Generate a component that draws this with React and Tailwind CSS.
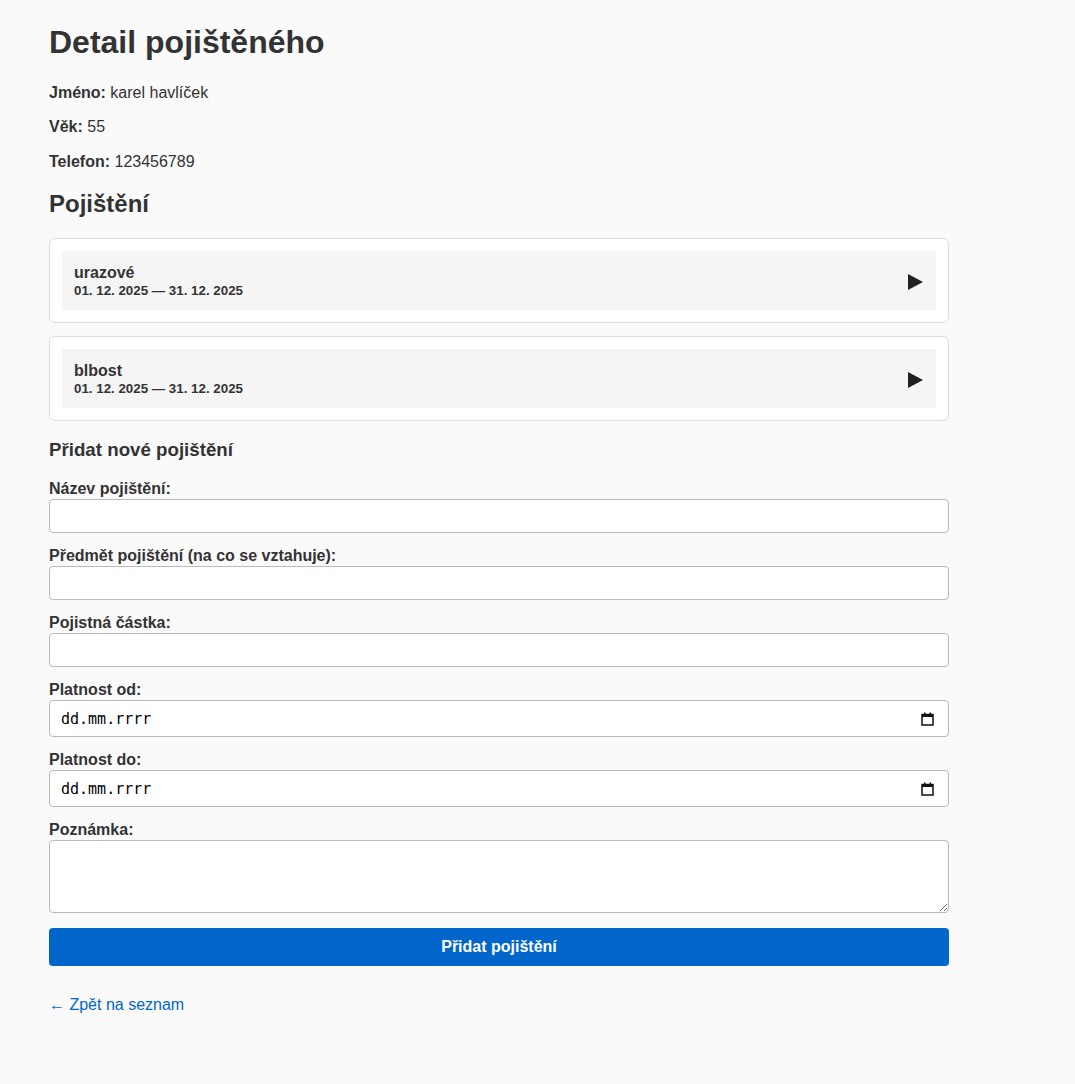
import React from "react";

const policies = [
	{name: "urazové", from: "01. 12. 2025", to: "31. 12. 2025"},
	{name: "blbost", from: "01. 12. 2025", to: "31. 12. 2025"},
];

const CalendarIcon = () => (
	<svg width="13" height="14" viewBox="0 0 13 14" fill="none">
		<rect x="1" y="2.5" width="11" height="10.5" stroke="#111" strokeWidth="1.5"/>
		<rect x="1" y="2.5" width="11" height="2.5" fill="#111"/>
		<rect x="3" y="0.5" width="1.5" height="2.5" fill="#111"/>
		<rect x="8.5" y="0.5" width="1.5" height="2.5" fill="#111"/>
	</svg>
);

const TextField = ({label}) => (
	<div>
		<label className="block font-bold leading-[18px] mb-px">{label}</label>
		<input type="text" className="block w-full h-[34px] mb-[14px] px-2 bg-white border border-[#bbb] rounded-[4px] outline-none"/>
	</div>
);

const DateField = ({label}) => (
	<div>
		<label className="block font-bold leading-[18px] mb-px">{label}</label>
		<div className="flex items-center justify-between w-full h-[37px] mb-[14px] pl-[11px] pr-[14px] bg-white border border-[#bbb] rounded-[4px]">
			<input
				type="text"
				placeholder="dd.mm.rrrr"
				className="flex-1 outline-none bg-transparent text-[15px] placeholder:text-black"
				style={{fontFamily: '"DejaVu Sans Mono", monospace'}}
			/>
			<CalendarIcon/>
		</div>
	</div>
);

const PolicyCard = ({policy}) => (
	<div className="bg-white border border-[#ddd] rounded-[6px] p-3 mb-[13px]">
		<div className="flex items-center justify-between h-[59px] bg-[#f5f5f5] pl-3 pr-[13px]">
			<div className="mt-[2px]">
				<div className="font-bold leading-[18px]">{policy.name}</div>
				<div className="font-bold text-[13.33px] leading-[16px] mt-px">{policy.from} — {policy.to}</div>
			</div>
			<svg width="15" height="16" viewBox="0 0 15 16" className="mt-[3px]">
				<polygon points="0,0 15,8 0,16" fill="#222"/>
			</svg>
		</div>
	</div>
);

export default function App() {
	return (
		<div
			className="min-h-[1084px] bg-[#fafafa] text-[#333] text-base"
			style={{fontFamily: '"Liberation Sans", Arial, sans-serif'}}
		>
			<div className="w-[900px] ml-[49px] pt-[24px]">
				<h1 className="text-[32px] leading-[37px] font-bold mb-[23px]">Detail pojištěného</h1>
				<p className="leading-[18.4px] mb-4"><b>Jméno:</b> karel havlíček</p>
				<p className="leading-[18.4px] mb-4"><b>Věk:</b> 55</p>
				<p className="leading-[18.4px]"><b>Telefon:</b> 123456789</p>
				<h2 className="text-2xl leading-[27.6px] font-bold mt-[19px] mb-[20px]">Pojištění</h2>

				{policies.map((p, i) => (
					<PolicyCard key={i} policy={p}/>
				))}

				<h3 className="text-[18.72px] leading-[21.5px] font-bold mt-[18px] mb-[20px]">Přidat nové pojištění</h3>

				<form onSubmit={(e) => e.preventDefault()}>
					<TextField label="Název pojištění:"/>
					<TextField label="Předmět pojištění (na co se vztahuje):"/>
					<TextField label="Pojistná částka:"/>
					<DateField label="Platnost od:"/>
					<DateField label="Platnost do:"/>
					<div>
						<label className="block font-bold leading-[18px] mb-px">Poznámka:</label>
						<textarea className="block w-full h-[73px] px-2 py-1 bg-white border border-[#bbb] rounded-[4px] outline-none"/>
					</div>
					<button
						type="submit"
						className="block w-full h-[38px] mt-[15px] bg-[#0066cc] text-white font-bold rounded-[4px]"
					>
						Přidat pojištění
					</button>
				</form>

				<a href="#" className="inline-block mt-[30px] text-[#0066cc] leading-[18.4px]">← Zpět na seznam</a>
			</div>
		</div>
	);
}
